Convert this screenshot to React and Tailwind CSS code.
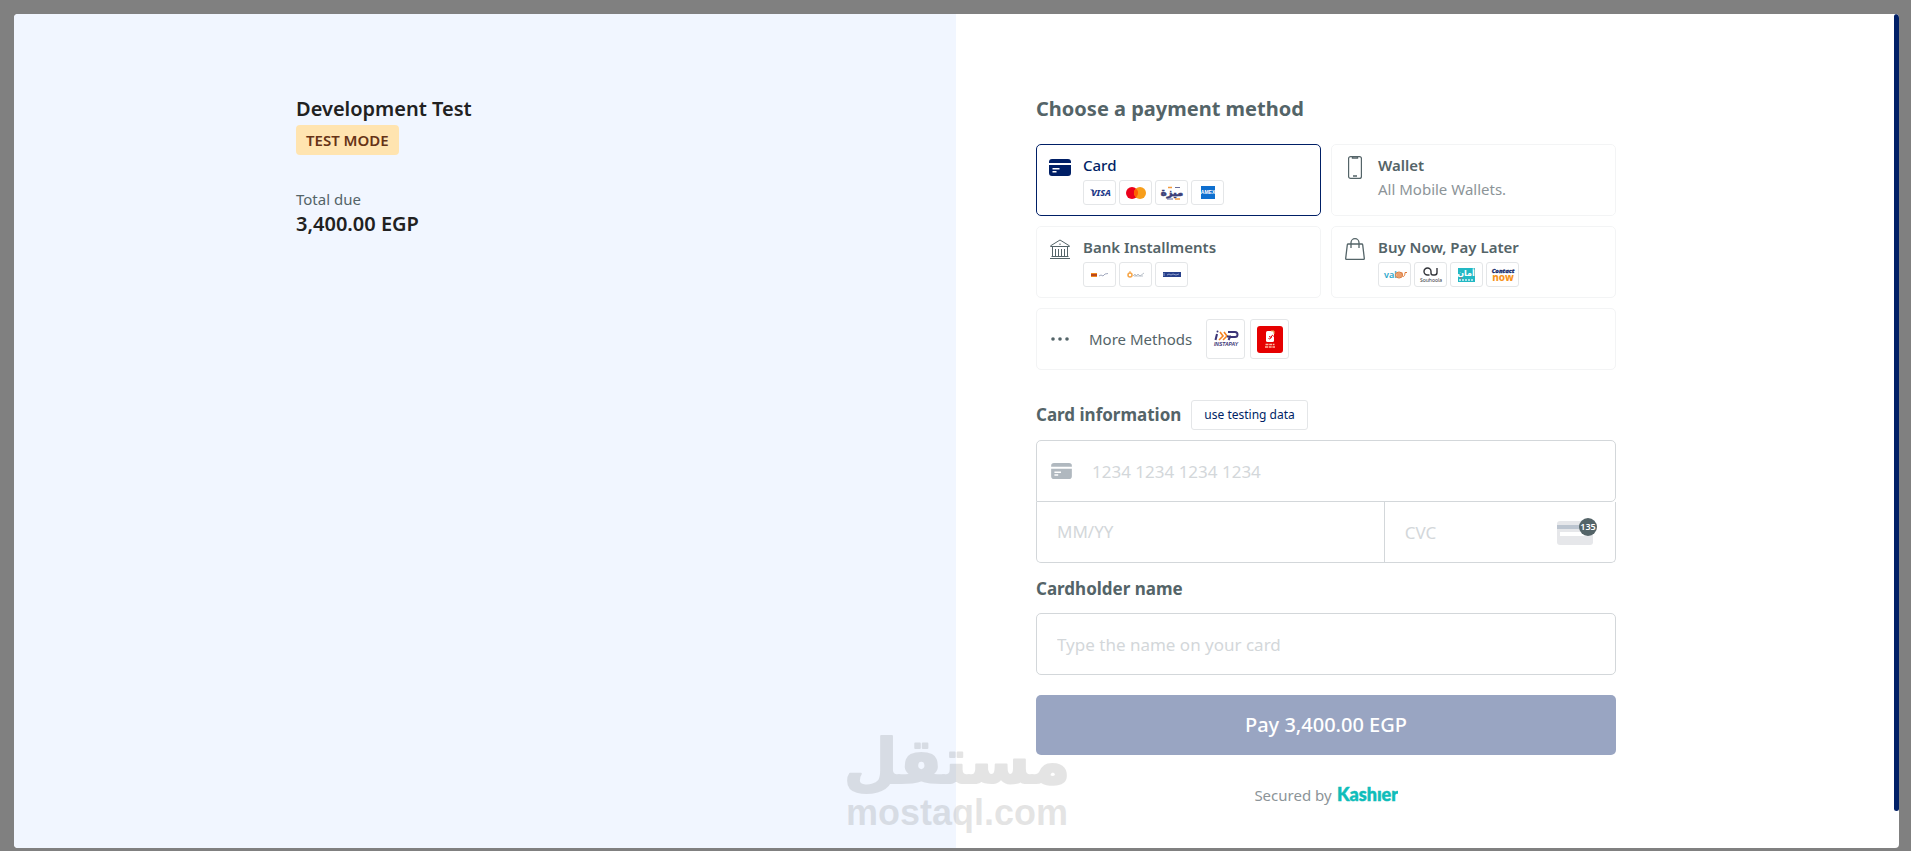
import { useState } from "react";
import clsx from "clsx";

const BrandTile = ({ children, large }) => (
  <span
    className={clsx(
      "flex items-center justify-center rounded-[3px] border border-[#e4e6e8] bg-white",
      large ? "h-10 w-[39px]" : "h-[25px] w-[33px]"
    )}
  >
    {children}
  </span>
);

const VisaLogo = () => (
  <svg width="30" height="16" viewBox="0 0 30 16" role="img" aria-label="Visa">
    <path d="M5 4.500h3l1.500 3z" fill="#1f3a8a" />
    <text x="16" y="11" textAnchor="middle" fontFamily="Noto Sans, sans-serif" fontSize="9" fontWeight="800" fontStyle="italic" fill="#1f3a8a">
      VISA
    </text>
  </svg>
);

const MastercardLogo = () => (
  <svg width="20" height="12" viewBox="0 0 20 12" role="img" aria-label="Mastercard">
    <circle cx="6" cy="6" r="6" fill="#eb001b" />
    <circle cx="14" cy="6" r="6" fill="#f79e1b" />
    <path d="M10 1.500a6 6 0 0 1 0 9a6 6 0 0 1 0-9z" fill="#ff5f00" />
  </svg>
);

const MeezaLogo = () => (
  <svg width="28" height="20" viewBox="0 0 28 20" role="img" aria-label="Meeza">
    <text x="14" y="13" textAnchor="middle" fontFamily="DejaVu Sans, sans-serif" fontSize="10" fontWeight="700" fill="#3b3f78" stroke="#3b3f78" strokeWidth=".6">
      ميزة
    </text>
    <path d="M10 4.500h4M17 16h5" stroke="#f39a3d" strokeWidth="1.500" />
    <path d="M17 4.500h5M9 16h6" stroke="#6a6d9b" strokeWidth="1.200" />
  </svg>
);

const AmexLogo = () => (
  <svg width="14" height="13" viewBox="0 0 14 13" role="img" aria-label="American Express">
    <rect width="14" height="13" fill="#0f6fcf" />
    <text x="7" y="8" textAnchor="middle" fontFamily="Liberation Sans, sans-serif" fontSize="5" fontWeight="700" fill="#fff">
      AMEX
    </text>
  </svg>
);

const BankOneLogo = () => (
  <svg width="18" height="6" viewBox="0 0 18 6" role="img" aria-label="Bank">
    <rect y="1" width="6" height="4" fill="#f28a1e" />
    <path d="M0 3h6" stroke="#a8321a" strokeWidth="1.500" />
    <path d="M8 4l2-1 2 1 2-2 3-.5" stroke="#8a93ad" fill="none" strokeWidth=".8" />
  </svg>
);

const BankTwoLogo = () => (
  <svg width="18" height="7" viewBox="0 0 18 7" role="img" aria-label="Bank">
    <circle cx="3" cy="4" r="2" fill="none" stroke="#f6a445" strokeWidth="1.500" />
    <path d="M3 0v2" stroke="#f6a445" />
    <path d="M6 5l2-2 1 2 2-2 2 2 4-3M7 5h9" stroke="#aab2be" fill="none" strokeWidth=".8" />
  </svg>
);

const BankThreeLogo = () => (
  <svg width="18" height="5" viewBox="0 0 18 5" role="img" aria-label="Bank">
    <rect width="18" height="5" fill="#27408b" />
    <path d="M1 1v3M4 3l2-1 2 1 2-1 3 1 3-1" stroke="#a9b6dc" fill="none" strokeWidth=".8" />
  </svg>
);

const ValuLogo = () => (
  <svg width="30" height="16" viewBox="0 0 30 16" role="img" aria-label="valU">
    <text x="4" y="11" fontFamily="Noto Sans, sans-serif" fontSize="9" fontWeight="600" fill="#2aa5c9">
      val
    </text>
    <ellipse cx="19" cy="8" rx="3.500" ry="3" fill="#f3c3a0" stroke="#d97b3f" />
    <path d="M17 7h4M17 9h4M22 5.500v3c1 2 3 1 3-3h2" stroke="#e07b39" fill="none" />
  </svg>
);

const SouhoolaLogo = () => (
  <svg width="26" height="20" viewBox="0 0 26 20" role="img" aria-label="Souhoola">
    <path
      d="M11.500 10H9.500a3.500 3.500 0 1 1 3.500-3.500V8a2 2 0 0 0 2 2h1.500a2.500 2.500 0 0 0 2.500-2.500V3"
      stroke="#33353a"
      fill="none"
      strokeWidth="1.400"
    />
    <text x="13" y="17" textAnchor="middle" fontFamily="Noto Sans, sans-serif" fontSize="5" fill="#33353a">
      Souhoola
    </text>
  </svg>
);

const AmanLogo = () => (
  <svg width="25" height="20" viewBox="0 0 25 20" role="img" aria-label="Aman">
    <rect x="4" y="3" width="17" height="14" fill="#22b8c4" />
    <text x="12" y="11" textAnchor="middle" fontFamily="DejaVu Sans, sans-serif" fontSize="8" fontWeight="700" fill="#fff">
      أمان
    </text>
    <path d="M5 15h15" stroke="#a9e3e8" strokeWidth="2" strokeDasharray="2 1" />
    <circle cx="7" cy="13" r=".8" fill="#e8505b" />
  </svg>
);

const ContactLogo = () => (
  <svg width="30" height="22" viewBox="0 0 30 22" role="img" aria-label="Contact Now">
    <text x="15" y="9" textAnchor="middle" fontFamily="Noto Sans, sans-serif" fontSize="6" fontWeight="800" fontStyle="italic" fill="#142a6b" stroke="#142a6b" strokeWidth=".3">
      Contact
    </text>
    <text x="15" y="17" textAnchor="middle" fontFamily="Noto Sans, sans-serif" fontSize="10" fontWeight="800" fill="#f7941d">
      now
    </text>
  </svg>
);

const InstapayLogo = () => (
  <svg width="32" height="22" viewBox="0 0 32 22" role="img" aria-label="InstaPay">
    <path d="M7 6l-1.500 6" stroke="#3b3476" strokeWidth="2" />
    <circle cx="7.500" cy="3.500" r="1" fill="#3b3476" />
    <path d="M10 4l3 4-4 4M14 4l3 4-4 4" stroke="#f58220" fill="none" strokeWidth="1.600" />
    <path d="M18 4h7a2 2 0 0 1 0 5h-5l-1.500 3M17 8.500h4" stroke="#3b3476" fill="none" strokeWidth="2" />
    <text x="16" y="18" textAnchor="middle" fontFamily="Liberation Sans, sans-serif" fontSize="5" fontWeight="700" fontStyle="italic" fill="#3b3476">
      INSTAPAY
    </text>
  </svg>
);

const CashLogo = () => (
  <svg width="26" height="27" viewBox="0 0 26 27" role="img" aria-label="Mobile cash">
    <rect width="26" height="27" rx="3" fill="#e60000" />
    <rect x="9" y="5" width="8" height="11" rx="1.500" fill="#fff" />
    <path d="M14 5h3v3" stroke="#e8b45a" fill="none" />
    <path d="M11.500 12.500a1.500 1.500 0 0 0 2.500-1l1-2a1 1 0 0 1 1.500 1M12 10.500l2.500 1" stroke="#e60000" fill="none" strokeWidth="1" />
    <path d="M8.500 18.500h9M8 21h10" stroke="#ffb9a0" strokeWidth="1.400" strokeDasharray="3 .7" />
  </svg>
);

const CardIcon = ({ className }) => (
  <svg className={className} viewBox="0 0 22 17" fill="currentColor" aria-hidden="true">
    <path d="M3 0h16a3 3 0 0 1 3 3v1H0V3a3 3 0 0 1 3-3z" />
    <path
      fillRule="evenodd"
      d="M0 6h22v8a3 3 0 0 1-3 3H3a3 3 0 0 1-3-3zm3.500 3v1.500h7V9zm0 3v1.500h4V12z"
    />
  </svg>
);

const PhoneIcon = () => (
  <svg width="14" height="23" viewBox="0 0 14 23" fill="none" stroke="currentColor" strokeWidth="1.200" aria-hidden="true">
    <rect x=".6" y=".6" width="12.800" height="21.800" rx="2" />
    <path d="M4.500 1v1h5V1M5 20h4" strokeWidth="1.400" />
  </svg>
);

const BankIcon = () => (
  <svg width="20" height="20" viewBox="0 0 20 20" fill="none" stroke="currentColor" aria-hidden="true">
    <path d="M.6 7.500V6.800L10 1l9.400 5.800v.7z" />
    <path d="M10 4.500V6M2.500 8v9.500M17.500 8v9.500M5.500 10v7.500M8.500 10v7.500M11.500 10v7.500M14.500 10v7.500M1.500 17.500h17M0 19.500h20" />
  </svg>
);

const BagIcon = () => (
  <svg width="20" height="22" viewBox="0 0 20 22" fill="none" stroke="currentColor" strokeWidth="1.300" strokeLinejoin="round" aria-hidden="true">
    <path d="M3.300 6h13.400a1 1 0 0 1 1 .9l1.600 13.400a.8.8 0 0 1-.8 1H1.500a.8.8 0 0 1-.8-1L2.300 6.900a1 1 0 0 1 1-.9z" />
    <path d="M6 10V4.700a4 4 0 0 1 8 0V10" />
  </svg>
);

const CvcIcon = () => (
  <svg width="40" height="28" viewBox="0 0 40 28" aria-hidden="true">
    <rect x="0" y="3" width="36" height="24" rx="3" fill="#e6e7ea" />
    <rect x="0" y="7" width="36" height="4" fill="#bcc5d0" />
    <rect x="3" y="14" width="29" height="4" fill="#fff" />
    <circle cx="31" cy="9" r="9" fill="#546468" />
    <text x="31" y="12" textAnchor="middle" fontFamily="Noto Sans, sans-serif" fontSize="9" fontWeight="600" fill="#fff">
      135
    </text>
  </svg>
);

const Watermark = () => (
  <svg width="240" height="130" viewBox="0 0 240 130" opacity=".1" role="img" aria-label="mostaql.com">
    <text
      x="120"
      y="69"
      textAnchor="middle"
      fontFamily="DejaVu Sans, sans-serif"
      fontSize="62"
      fontWeight="700"
      stroke="#000"
      strokeWidth="2"
      strokeLinejoin="round"
    >
      مستقل
    </text>
    <text x="120" y="111" textAnchor="middle" fontFamily="Liberation Sans, Arial, sans-serif" fontSize="36" fontWeight="700">
      mostaql.com
    </text>
  </svg>
);

const methods = [
  {
    id: "card",
    title: "Card",
    icon: <CardIcon className="h-[17px] w-[22px]" />,
    logos: [VisaLogo, MastercardLogo, MeezaLogo, AmexLogo],
  },
  {
    id: "wallet",
    title: "Wallet",
    icon: <PhoneIcon />,
    text: "All Mobile Wallets.",
  },
  {
    id: "bank",
    title: "Bank Installments",
    icon: <BankIcon />,
    logos: [BankOneLogo, BankTwoLogo, BankThreeLogo],
  },
  {
    id: "bnpl",
    title: "Buy Now, Pay Later",
    icon: <BagIcon />,
    logos: [ValuLogo, SouhoolaLogo, AmanLogo, ContactLogo],
  },
];

const MethodCard = ({ method, active, onSelect }) => (
  <button
    type="button"
    aria-pressed={active}
    onClick={() => onSelect(method.id)}
    className={clsx(
      "flex h-[72px] items-start rounded-[5px] border pt-2 pl-3 text-left",
      active ? "border-[#001f66] text-[#001f66]" : "border-[#f3f4f5] text-[#546468]"
    )}
  >
    <span className="mr-3 flex h-7 w-[22px] items-center justify-center">{method.icon}</span>
    <span className="block">
      <span className={clsx("block text-[15px] leading-6", active ? "font-medium" : "font-semibold")}>
        {method.title}
      </span>
      {method.text && <span className="block text-[15px] leading-6 text-[#8c9498]">{method.text}</span>}
      {method.logos && (
        <span className="mt-[3px] flex gap-[3px]">
          {method.logos.map((Logo, index) => (
            <BrandTile key={index}>
              <Logo />
            </BrandTile>
          ))}
        </span>
      )}
    </span>
  </button>
);

function App() {
  const [selected, setSelected] = useState("card");
  const [card, setCard] = useState({ number: "", expiry: "", cvc: "", name: "" });

  const handleChange = (e) => setCard((prev) => ({ ...prev, [e.target.name]: e.target.value }));

  const fillTestingData = () =>
    setCard({ number: "5111 1111 1111 1118", expiry: "06/28", cvc: "100", name: "Test User" });

  return (
    <div className="flex min-h-screen bg-[#808080] pt-[14px] pr-3 pb-[3px] pl-[14px] font-['Noto_Sans',sans-serif]">
      <div className="relative flex flex-1 overflow-hidden rounded-[4px] bg-white pr-px">
        {/* Order summary */}
        <section className="flex flex-1 justify-end bg-[#f1f6ff] pt-20 pr-20">
          <div className="w-full max-w-[580px]">
            <h1 className="text-xl leading-[30px] font-semibold text-[#212121]">Development Test</h1>
            <span className="mt-px inline-block rounded-[4px] bg-[#ffe4b0] px-[10px] text-[15px] leading-[30px] font-semibold text-[#663316]">
              TEST MODE
            </span>
            <p className="mt-8 text-[15px] leading-6 text-[#546468]">Total due</p>
            <p className="text-xl leading-[26px] font-semibold text-[#212121]">3,400.00 EGP</p>
          </div>
        </section>

        {/* Payment form */}
        <main className="flex-1 pt-20 pl-20">
          <div className="w-full max-w-[580px]">
            <h2 className="mb-5 text-xl leading-[30px] font-bold text-[#546468]">Choose a payment method</h2>

            <div className="grid grid-cols-2 gap-[10px]">
              {methods.map((method) => (
                <MethodCard
                  key={method.id}
                  method={method}
                  active={selected === method.id}
                  onSelect={setSelected}
                />
              ))}
              <button
                type="button"
                aria-pressed={selected === "more"}
                onClick={() => setSelected("more")}
                className="col-span-2 flex h-[62px] items-center rounded-[5px] border border-[#f3f4f5] pl-[14px] text-[#546468]"
              >
                <svg width="18" height="4" viewBox="0 0 18 4" fill="currentColor" aria-hidden="true">
                  <circle cx="2" cy="2" r="1.800" />
                  <circle cx="9" cy="2" r="1.800" />
                  <circle cx="16" cy="2" r="1.800" />
                </svg>
                <span className="mr-[14px] ml-5 text-[15px]">More Methods</span>
                <span className="flex gap-[5px]">
                  <BrandTile large>
                    <InstapayLogo />
                  </BrandTile>
                  <BrandTile large>
                    <CashLogo />
                  </BrandTile>
                </span>
              </button>
            </div>

            <form onSubmit={(e) => e.preventDefault()}>
              <div className="mt-[30px] mb-[10px] flex items-center gap-[10px]">
                <h3 className="text-[17px] leading-6 font-bold text-[#546468]">Card information</h3>
                <button
                  type="button"
                  onClick={fillTestingData}
                  className="h-[30px] rounded-[3px] border border-[#e4e6e8] px-3 text-xs text-[#001f66]"
                >
                  use testing data
                </button>
              </div>

              <div className="flex h-[62px] items-center rounded-[5px] rounded-bl-none border border-[#d3d7da] pl-[14px]">
                <CardIcon className="h-4 w-[21px] text-[#b0b8bf]" />
                <input
                  name="number"
                  aria-label="Card number"
                  value={card.number}
                  onChange={handleChange}
                  placeholder="1234 1234 1234 1234"
                  className="ml-5 h-full min-w-0 flex-1 text-[17px] outline-none placeholder:text-[#d3d7da]"
                />
              </div>
              <div className="grid h-[61px] grid-cols-[3fr_2fr] rounded-b-[5px] border border-t-0 border-[#d3d7da]">
                <input
                  name="expiry"
                  aria-label="Expiry date"
                  value={card.expiry}
                  onChange={handleChange}
                  placeholder="MM/YY"
                  className="min-w-0 pl-5 text-[17px] outline-none placeholder:text-[#d3d7da]"
                />
                <div className="flex min-w-0 items-center border-l border-[#d3d7da] pr-[18px]">
                  <input
                    name="cvc"
                    aria-label="CVC"
                    value={card.cvc}
                    onChange={handleChange}
                    placeholder="CVC"
                    className="h-full min-w-0 flex-1 pl-5 text-[17px] outline-none placeholder:text-[#d3d7da]"
                  />
                  <CvcIcon />
                </div>
              </div>

              <label htmlFor="holder" className="mt-[14px] block text-[17px] leading-6 font-bold text-[#546468]">
                Cardholder name
              </label>
              <input
                id="holder"
                name="name"
                value={card.name}
                onChange={handleChange}
                placeholder="Type the name on your card"
                className="mt-3 h-[62px] w-full rounded-[5px] border border-[#d3d7da] pl-5 text-[17px] outline-none placeholder:text-[#d3d7da]"
              />

              <button
                type="submit"
                className="mt-5 h-[60px] w-full rounded-[5px] bg-[#99a5c2] text-xl font-medium text-white"
              >
                Pay 3,400.00 EGP
              </button>
            </form>

            <p className="mt-7 flex items-center justify-center gap-1 text-[15px] leading-6 text-[#8c9498]">
              Secured by
              <a href="#kashier" aria-label="Kashier">
                <svg width="62" height="22" viewBox="0 0 62 22" aria-hidden="true">
                  <text x="1" y="17" fontFamily="Lato, sans-serif" fontSize="18" fontWeight="900" fill="#0fbdba" stroke="#0fbdba" strokeWidth=".5">
                    Kashıer
                  </text>
                </svg>
              </a>
            </p>
          </div>
        </main>

        {/* Scroll thumb */}
        <div className="absolute top-0 right-0 bottom-[37px] w-[5px] rounded-full bg-[#001f66]" />

        {/* Watermark */}
        <div className="pointer-events-none absolute bottom-1 left-1/2 -translate-x-1/2">
          <Watermark />
        </div>
      </div>
    </div>
  );
}

export default App;
